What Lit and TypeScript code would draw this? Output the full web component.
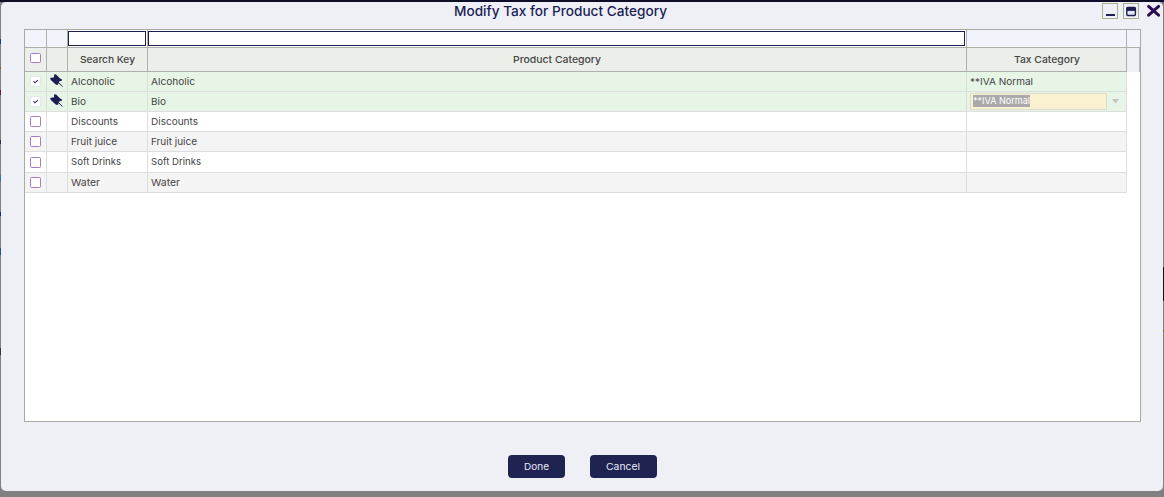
import { LitElement, html, css, svg } from "lit";
import { customElement } from "lit/decorators.js";

const rows = [
  { name: "Alcoholic", w: 44, on: true, tax: "value" },
  { name: "Bio", w: 15, on: true, tax: "edit" },
  { name: "Discounts", w: 47, on: false, tax: "" },
  { name: "Fruit juice", w: 46, on: false, tax: "" },
  { name: "Soft Drinks", w: 50, on: false, tax: "" },
  { name: "Water", w: 29, on: false, tax: "" },
];

// A label stretched to a fixed advance width.
const label = (text: string, w: number, size = 9.5, weight = 400, fill = "#444") => html`
  <svg class="label" width=${w} height="20" viewBox="0 0 ${w} 20">
    ${svg`<text x="0" y="13.4" font-size=${size} font-weight=${weight} fill=${fill} textLength=${w} lengthAdjust="spacingAndGlyphs">${text}</text>`}
  </svg>`;

const pin = html`<svg class="pin" width="14" height="14" viewBox="0 0 14 14">
  <path d="M4.7 .2 6.1 .6 10.1 4.4 12 5.6 11.8 6.8 9 7.6 8.2 10.4 7 11 5.4 10.2 .8 6 .2 4.6 .8 3.8 3.6 3.6 4.2 2.6 4 1Z" fill="#1b1f55"/>
  <path d="M8 8 12.4 12.6" stroke="#1b1f55" stroke-width="1"/></svg>`;

@customElement("app-root")
export class AppRoot extends LitElement {
  static styles = css`
    :host { display: block; width: 1164px; height: 497px; box-sizing: border-box;
      background:
        linear-gradient(#1d3c66, #1d3c66) 0 39px / 1px 5px no-repeat,
        linear-gradient(#8f5a2c, #8f5a2c) 0 67px / 1px 2px no-repeat,
        linear-gradient(#5e1f38, #5e1f38) 0 90px / 1px 5px no-repeat,
        linear-gradient(#27304d, #27304d) 0 140px / 1px 4px no-repeat,
        linear-gradient(#3d7796, #3d7796) 0 175px / 1px 7px no-repeat,
        linear-gradient(#142f5c, #142f5c) 0 212px / 1px 4px no-repeat,
        linear-gradient(#235488, #235488) 0 248px / 1px 7px no-repeat,
        linear-gradient(#34343f, #34343f) 0 348px / 1px 7px no-repeat,
        linear-gradient(#0e0e28, #0e0e28) 1163px 267px / 1px 34px no-repeat,
        linear-gradient(#80602e, #80602e) 1163px 330px / 1px 2px no-repeat,
        #808080;
      background-origin: border-box;
      border-top: 2px solid #0e0e28; padding: 0 1px; font-family: Inter, "Open Sans", sans-serif; overflow: hidden; }
    * { box-sizing: border-box; }
    svg { display: block; }
    .label { overflow: visible; flex: none; }
    .dialog { height: 489px; background: #eff0f6; border-radius: 5px; display: flex; flex-direction: column; }
    .bar { height: 27px; flex: none; display: grid; grid-template-columns: 452.5px 213px 1fr; }
    .bar > .label { margin-top: 1px; }
    .tools { display: flex; justify-content: flex-end; gap: 5px; padding: 1px 1px 0 0; }
    .tool { width: 16px; height: 16px; border: 1px solid #a3b18c; }
    .close { margin-left: 2px; }
    .grid { width: 1117px; height: 393px; flex: none; margin-left: 23px; border: 1px solid #a9a9a9; background: #fff; }
    .line { display: grid; grid-template-columns: 22px 21px 80px 819px 160px 13px; }
    .cell { border-right: 1px solid #ddd; border-bottom: 1px solid #ddd; display: flex; align-items: center; overflow: hidden; padding-left: 3px; }
    .filter { height: 18px; background: #f1f5fb; }
    .filter .cell, .head .cell { border-color: #aeb0ab; justify-content: center; padding: 0; }
    .filter .end { border-right: 0; }
    .field { width: 100%; height: 15px; background: #fff; border: 1px solid #1b1f50; }
    .filter .cell.input { padding: 1px 1px 0 0; align-items: flex-start; background: #fff; }
    .head { height: 24px; background: #ebeee9; }
    .head .cell.end { background: #eff0f6; border-bottom: 0; border-right: 1px solid #b8b8b8; }
    .head .cell.tick { padding-bottom: 3px; }
    .row { height: 20px; }
    .row.tall { height: 21px; }
    .row.odd { background: #f4f4f4; }
    .row.on { background: #e7f5e7; }
    .row .end { background: #fff; }
    .cell.tick { padding: 0; justify-content: center; }
    .box { width: 11px; height: 10px; border: 1px solid #a27fc4; border-radius: 1.5px; background: #fff; }
    .row .box { height: 11px; }
    .row .box.done { width: 11px; border-color: #e3e6ea; border-radius: 2px; }
    .cell.pinned { padding: 2px 0 0 3px; align-items: flex-start; justify-content: flex-start; }
    .pin { flex: none; }
    .edit { width: 137px; height: 17px; background: #faf1d0; border: 1px solid #ddddce; padding: 1px 2px; }
    .picked { width: 57px; height: 12px; background: #aaa; display: flex; align-items: center; }
    .arrow { margin-left: 5px; }
    .actions { display: flex; justify-content: center; gap: 25px; padding-top: 33px; }
    .btn { height: 23px; width: 57px; border: 0; border-radius: 4px; background: #1e2352; display: flex; align-items: center; justify-content: center; padding: 0; font-family: inherit; }
    .btn.wide { width: 67px; }
  `;

  render() {
    return html`<div class="dialog">
      <div class="bar">
        <span></span>
        ${label("Modify Tax for Product Category", 213, 13.6, 500, "#1b1f55")}
        <div class="tools">
          <svg class="tool" viewBox="0 0 14 14"><path d="M3 11h9" stroke="#1b1f55" stroke-width="2"/></svg>
          <svg class="tool" viewBox="0 0 14 14"><rect x="2.8" y="3.5" width="8.6" height="8" rx="1" fill="#e4e8f2" stroke="#1b1f55" stroke-width="1.4"/><path d="M2.6 5.2h9" stroke="#1b1f55" stroke-width="3.4"/></svg>
          <svg class="close" width="16" height="16" viewBox="0 0 16 16"><path d="M2.6 3.4 12.6 12.2M12.6 3.4 2.6 12.2" stroke="#2b0a55" stroke-width="3" stroke-linecap="round"/></svg>
        </div>
      </div>
      <div class="grid">
        <div class="line filter">
          <div class="cell"></div><div class="cell"></div>
          <div class="cell input"><div class="field"></div></div>
          <div class="cell input"><div class="field"></div></div>
          <div class="cell"></div><div class="cell end"></div>
        </div>
        <div class="line head">
          <div class="cell tick"><div class="box"></div></div><div class="cell"></div>
          <div class="cell">${label("Search Key", 55, 9.6, 500)}</div>
          <div class="cell">${label("Product Category", 88, 9.6, 500)}</div>
          <div class="cell">${label("Tax Category", 66, 9.6, 500)}</div>
          <div class="cell end"></div>
        </div>
        ${rows.map((r, i) => html`<div class="line row ${r.on ? "on" : i % 2 ? "odd" : ""} ${i === 4 ? "tall" : ""}">
          <div class="cell tick">${r.on
            ? html`<svg class="box done" viewBox="0 0 9 9"><path d="M2.4 4.2 4 5.8 6.8 3.2" fill="none" stroke="#3b2860" stroke-width="1.1"/></svg>`
            : html`<div class="box"></div>`}</div>
          <div class="cell pinned">${r.on ? pin : ""}</div>
          <div class="cell">${label(r.name, r.w)}</div>
          <div class="cell">${label(r.name, r.w)}</div>
          <div class="cell">${r.tax === "value" ? label("**IVA Normal", 63)
            : r.tax === "edit" ? html`<div class="edit"><div class="picked">${label("**IVA Normal", 57, 9.2, 400, "#fff")}</div></div>
              <svg class="arrow" width="7" height="5" viewBox="0 0 7 5"><path d="M0 0h7L3.5 4.5Z" fill="#bfc5bf"/></svg>` : ""}</div>
          <div class="end"></div>
        </div>`)}
      </div>
      <div class="actions">
        <button class="btn">${label("Done", 25, 9.6, 400, "#e9eaf5")}</button>
        <button class="btn wide">${label("Cancel", 34, 9.6, 400, "#e9eaf5")}</button>
      </div>
    </div>`;
  }
}
